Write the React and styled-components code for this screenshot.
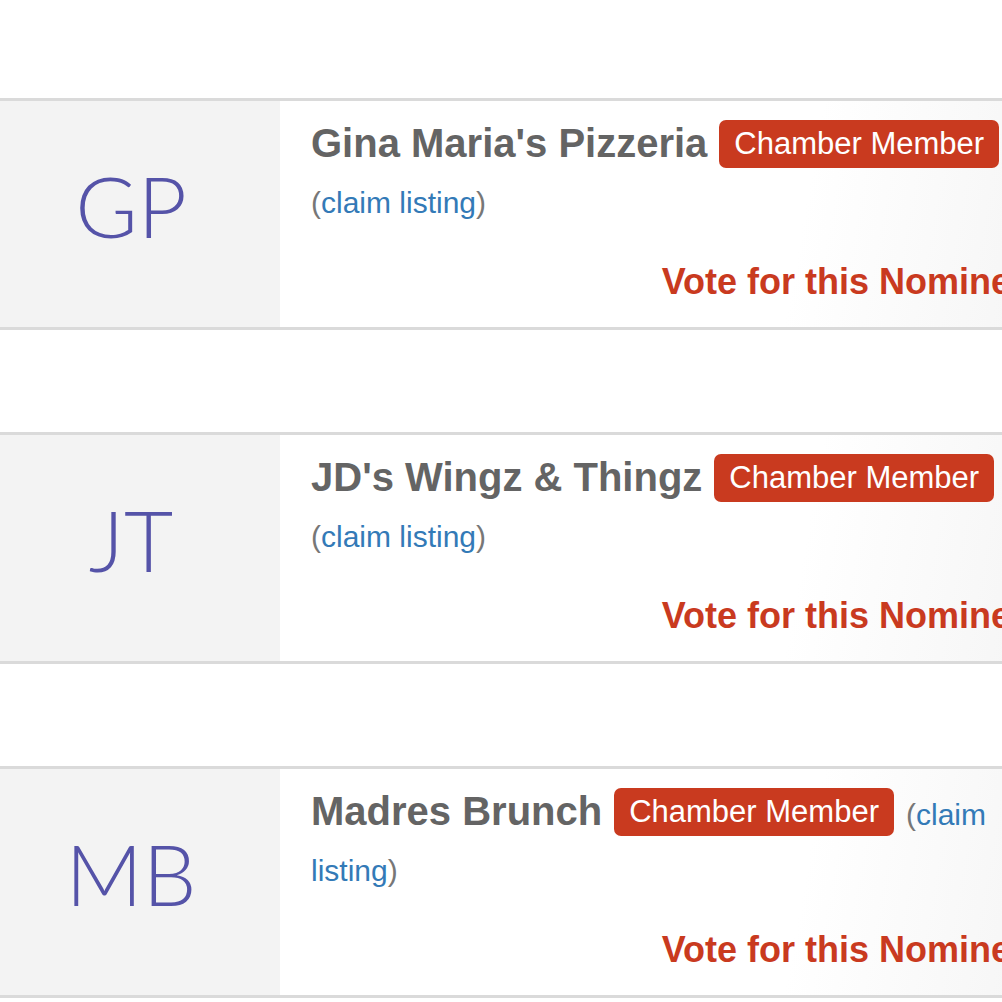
import React from "react";
import styled, { createGlobalStyle } from "styled-components";

const GlobalStyle = createGlobalStyle`
  html, body {
    margin: 0;
    padding: 0;
    background: #fff;
    overflow: hidden;
  }
  body {
    font-family: "Liberation Sans", Arial, sans-serif;
  }
`;

const Page = styled.div`
  width: 1002px;
  height: 1002px;
  overflow: hidden;
  padding-top: 98px;
  box-sizing: border-box;
  display: flex;
  flex-direction: column;
  gap: 102px;
`;

const Card = styled.div`
  width: 1040px;
  display: flex;
  border-top: 3px solid #dadada;
  border-bottom: 3px solid #dadada;
  flex-shrink: 0;
`;

const Avatar = styled.div`
  width: 280px;
  flex-shrink: 0;
  background: #f3f3f3;
  display: flex;
  align-items: center;
  justify-content: center;
  box-sizing: border-box;
  padding: 0 18px 18px 0;
  font-family: "Lato", "Open Sans", sans-serif;
  font-weight: 300;
  font-size: 85px;
  line-height: 1;
  color: #5553a8;
`;

const Content = styled.div`
  flex: 1;
  box-sizing: border-box;
  padding: 14px 9px 25px 31px;
  background: linear-gradient(100deg, #ffffff 68%, #f5f5f5 100%);
`;

const Info = styled.div`
  font-size: 30px;
  line-height: 56px;
  color: #777;
`;

const Name = styled.span`
  font-size: 40px;
  font-weight: 700;
  color: #646464;
`;

const Badge = styled.span`
  display: inline-block;
  height: 48px;
  line-height: 48px;
  padding: 0 15px;
  margin: 0 12px 0 12px;
  vertical-align: 3px;
  border-radius: 7px;
  background: #c93a1f;
  color: #fff;
  font-size: 31px;
  white-space: nowrap;
`;

const Claim = styled.a`
  color: #337ab7;
  text-decoration: none;
`;

const Vote = styled.a`
  display: block;
  margin-top: 31px;
  text-align: right;
  font-size: 36px;
  line-height: 40px;
  font-weight: 700;
  color: #c93a1f;
  text-decoration: none;
  white-space: nowrap;
`;

const nominees = [
  { initials: "GP", name: "Gina Maria's Pizzeria" },
  { initials: "JT", name: "JD's Wingz & Thingz" },
  { initials: "MB", name: "Madres Brunch" },
];

const App = () => (
  <>
    <GlobalStyle />
    <Page>
      {nominees.map((n) => (
        <Card key={n.initials}>
          <Avatar>{n.initials}</Avatar>
          <Content>
            <Info>
              <Name>{n.name}</Name>
              <Badge>Chamber Member</Badge>(<Claim href="#">claim listing</Claim>)
            </Info>
            <Vote href="#">Vote for this Nominee</Vote>
          </Content>
        </Card>
      ))}
    </Page>
  </>
);

export default App;
